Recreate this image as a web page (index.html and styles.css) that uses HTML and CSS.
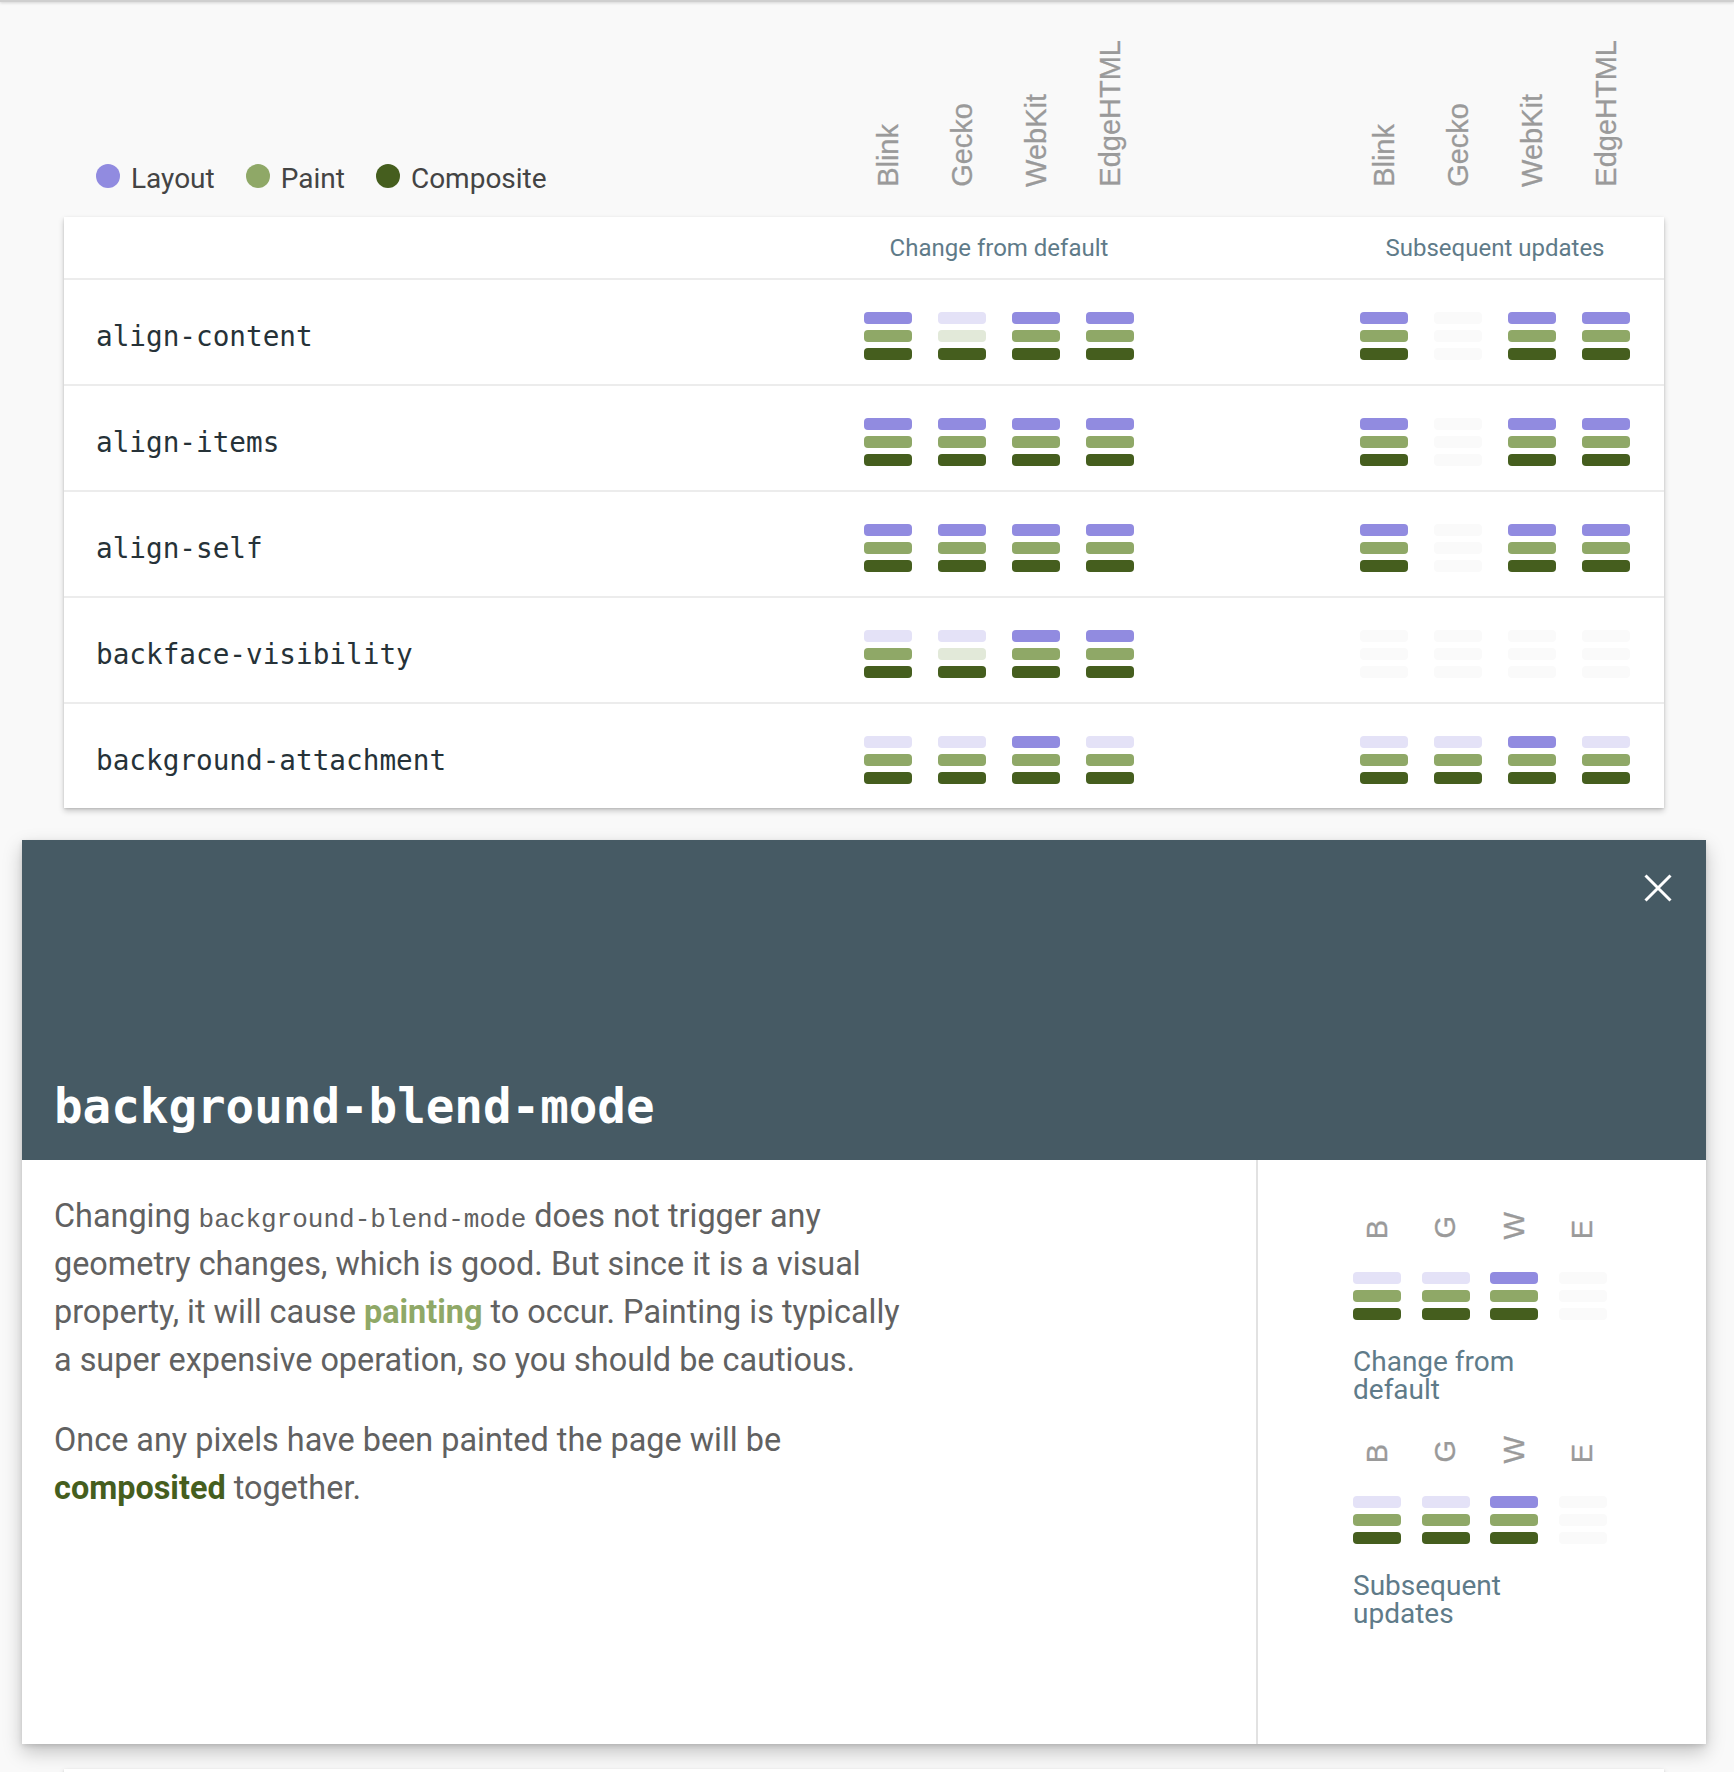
FILE: index.html
```html
<!DOCTYPE html>
<html lang="en">
<head>
<meta charset="utf-8">
<title>CSS Triggers</title>
<link rel="stylesheet" href="styles.css">
</head>
<body>
<div class="topbar"></div>
<div class="page">
  <div class="head grid">
    <div class="legend">
      <span class="legend-item"><span class="dot dot-layout"></span>Layout</span>
      <span class="legend-item"><span class="dot dot-paint"></span>Paint</span>
      <span class="legend-item"><span class="dot dot-composite"></span>Composite</span>
    </div>
    <div class="engines g1">
      <div class="engine"><span>Blink</span></div>
      <div class="engine"><span>Gecko</span></div>
      <div class="engine"><span>WebKit</span></div>
      <div class="engine"><span>EdgeHTML</span></div>
    </div>
    <div class="engines g2">
      <div class="engine"><span>Blink</span></div>
      <div class="engine"><span>Gecko</span></div>
      <div class="engine"><span>WebKit</span></div>
      <div class="engine"><span>EdgeHTML</span></div>
    </div>
  </div>

  <div class="card table">
    <div class="row row-head grid">
      <div class="group-label g1">Change from default</div>
      <div class="group-label g2">Subsequent updates</div>
    </div>

    <div class="row grid">
      <div class="prop">align-content</div>
      <div class="bars g1">
        <div class="cell"><i class="b l"></i><i class="b p"></i><i class="b c"></i></div>
        <div class="cell"><i class="b l off"></i><i class="b p off"></i><i class="b c"></i></div>
        <div class="cell"><i class="b l"></i><i class="b p"></i><i class="b c"></i></div>
        <div class="cell"><i class="b l"></i><i class="b p"></i><i class="b c"></i></div>
      </div>
      <div class="bars g2">
        <div class="cell"><i class="b l"></i><i class="b p"></i><i class="b c"></i></div>
        <div class="cell"><i class="b none"></i><i class="b none"></i><i class="b none"></i></div>
        <div class="cell"><i class="b l"></i><i class="b p"></i><i class="b c"></i></div>
        <div class="cell"><i class="b l"></i><i class="b p"></i><i class="b c"></i></div>
      </div>
    </div>

    <div class="row grid">
      <div class="prop">align-items</div>
      <div class="bars g1">
        <div class="cell"><i class="b l"></i><i class="b p"></i><i class="b c"></i></div>
        <div class="cell"><i class="b l"></i><i class="b p"></i><i class="b c"></i></div>
        <div class="cell"><i class="b l"></i><i class="b p"></i><i class="b c"></i></div>
        <div class="cell"><i class="b l"></i><i class="b p"></i><i class="b c"></i></div>
      </div>
      <div class="bars g2">
        <div class="cell"><i class="b l"></i><i class="b p"></i><i class="b c"></i></div>
        <div class="cell"><i class="b none"></i><i class="b none"></i><i class="b none"></i></div>
        <div class="cell"><i class="b l"></i><i class="b p"></i><i class="b c"></i></div>
        <div class="cell"><i class="b l"></i><i class="b p"></i><i class="b c"></i></div>
      </div>
    </div>

    <div class="row grid">
      <div class="prop">align-self</div>
      <div class="bars g1">
        <div class="cell"><i class="b l"></i><i class="b p"></i><i class="b c"></i></div>
        <div class="cell"><i class="b l"></i><i class="b p"></i><i class="b c"></i></div>
        <div class="cell"><i class="b l"></i><i class="b p"></i><i class="b c"></i></div>
        <div class="cell"><i class="b l"></i><i class="b p"></i><i class="b c"></i></div>
      </div>
      <div class="bars g2">
        <div class="cell"><i class="b l"></i><i class="b p"></i><i class="b c"></i></div>
        <div class="cell"><i class="b none"></i><i class="b none"></i><i class="b none"></i></div>
        <div class="cell"><i class="b l"></i><i class="b p"></i><i class="b c"></i></div>
        <div class="cell"><i class="b l"></i><i class="b p"></i><i class="b c"></i></div>
      </div>
    </div>

    <div class="row grid">
      <div class="prop">backface-visibility</div>
      <div class="bars g1">
        <div class="cell"><i class="b l off"></i><i class="b p"></i><i class="b c"></i></div>
        <div class="cell"><i class="b l off"></i><i class="b p off"></i><i class="b c"></i></div>
        <div class="cell"><i class="b l"></i><i class="b p"></i><i class="b c"></i></div>
        <div class="cell"><i class="b l"></i><i class="b p"></i><i class="b c"></i></div>
      </div>
      <div class="bars g2">
        <div class="cell"><i class="b none"></i><i class="b none"></i><i class="b none"></i></div>
        <div class="cell"><i class="b none"></i><i class="b none"></i><i class="b none"></i></div>
        <div class="cell"><i class="b none"></i><i class="b none"></i><i class="b none"></i></div>
        <div class="cell"><i class="b none"></i><i class="b none"></i><i class="b none"></i></div>
      </div>
    </div>

    <div class="row grid">
      <div class="prop">background-attachment</div>
      <div class="bars g1">
        <div class="cell"><i class="b l off"></i><i class="b p"></i><i class="b c"></i></div>
        <div class="cell"><i class="b l off"></i><i class="b p"></i><i class="b c"></i></div>
        <div class="cell"><i class="b l"></i><i class="b p"></i><i class="b c"></i></div>
        <div class="cell"><i class="b l off"></i><i class="b p"></i><i class="b c"></i></div>
      </div>
      <div class="bars g2">
        <div class="cell"><i class="b l off"></i><i class="b p"></i><i class="b c"></i></div>
        <div class="cell"><i class="b l off"></i><i class="b p"></i><i class="b c"></i></div>
        <div class="cell"><i class="b l"></i><i class="b p"></i><i class="b c"></i></div>
        <div class="cell"><i class="b l off"></i><i class="b p"></i><i class="b c"></i></div>
      </div>
    </div>
  </div>
</div>

<div class="modal">
  <div class="modal-head">
    <button class="close" aria-label="Close">
      <svg width="28" height="28" viewBox="0 0 28 28"><path d="M1.5 1.5 L26.5 26.5 M26.5 1.5 L1.5 26.5" stroke="#ffffff" stroke-width="3" fill="none"/></svg>
    </button>
    <h1 class="modal-title">background-blend-mode</h1>
  </div>
  <div class="modal-body">
    <div class="desc">
      <p>Changing <code>background-blend-mode</code> does not trigger any geometry changes, which is good. But since it is a visual property, it will cause <strong class="paint-word">painting</strong> to occur. Painting is typically a super expensive operation, so you should be cautious.</p>
      <p>Once any pixels have been painted the page will be <strong class="comp-word">composited</strong> together.</p>
    </div>
    <div class="side">
      <div class="side-group">
        <div class="letters">
          <div class="letter"><span>B</span></div>
          <div class="letter"><span>G</span></div>
          <div class="letter"><span>W</span></div>
          <div class="letter"><span>E</span></div>
        </div>
        <div class="side-bars">
          <div class="cell"><i class="b l off"></i><i class="b p"></i><i class="b c"></i></div>
          <div class="cell"><i class="b l off"></i><i class="b p"></i><i class="b c"></i></div>
          <div class="cell"><i class="b l"></i><i class="b p"></i><i class="b c"></i></div>
          <div class="cell"><i class="b none"></i><i class="b none"></i><i class="b none"></i></div>
        </div>
        <div class="side-label">Change from default</div>
      </div>
      <div class="side-group">
        <div class="letters">
          <div class="letter"><span>B</span></div>
          <div class="letter"><span>G</span></div>
          <div class="letter"><span>W</span></div>
          <div class="letter"><span>E</span></div>
        </div>
        <div class="side-bars">
          <div class="cell"><i class="b l off"></i><i class="b p"></i><i class="b c"></i></div>
          <div class="cell"><i class="b l off"></i><i class="b p"></i><i class="b c"></i></div>
          <div class="cell"><i class="b l"></i><i class="b p"></i><i class="b c"></i></div>
          <div class="cell"><i class="b none"></i><i class="b none"></i><i class="b none"></i></div>
        </div>
        <div class="side-label">Subsequent updates</div>
      </div>
    </div>
  </div>
</div>

<div class="page">
  <div class="card table next"></div>
</div>
</body>
</html>
```

FILE: styles.css
```css
* { box-sizing: border-box; }

html, body {
  margin: 0;
  padding: 0;
  background: #f9f9f9;
  font-family: Roboto, "Noto Sans", sans-serif;
}

.topbar {
  height: 2px;
  background: #cfcfcf;
  box-shadow: 0 1px 3px rgba(0, 0, 0, 0.18);
}

.page {
  margin-left: 64px;
  width: 1600px;
}

.grid {
  display: grid;
  grid-template-columns: 1fr 296px 200px 296px;
  padding-right: 21px;
}

.g1 { grid-column: 2; }
.g2 { grid-column: 4; }

/* ---------- header above the table ---------- */
.head {
  height: 215px;
  padding-bottom: 30px;
  align-items: end;
}

.legend {
  grid-column: 1;
  display: flex;
  align-items: center;
  gap: 31px;
  padding-left: 32px;
  margin-bottom: -8px;
  font-size: 28px;
  color: #444444;
}

.legend-item {
  display: flex;
  align-items: center;
}

.dot {
  width: 24px;
  height: 24px;
  border-radius: 50%;
  margin-right: 11px;
  margin-bottom: 5px;
}

.dot-layout { background: #918be0; }
.dot-paint { background: #8fa867; }
.dot-composite { background: #455e1e; }

.engines {
  display: flex;
  align-items: flex-end;
}

.engine {
  width: 74px;
  display: flex;
  justify-content: center;
  align-items: flex-end;
}

.engine span,
.letter span {
  writing-mode: vertical-rl;
  transform: rotate(180deg);
  font-family: "Liberation Sans", Arial, sans-serif;
  font-size: 29px;
  line-height: 1;
  color: #9a9a9a;
  white-space: nowrap;
  -webkit-text-stroke: 0.3px #9a9a9a;
}

/* ---------- table ---------- */
.card {
  background: #ffffff;
  box-shadow: 0 3px 6px rgba(0, 0, 0, 0.2), 0 1px 2px rgba(0, 0, 0, 0.12);
}

.row {
  height: 106px;
  padding-top: 8px;
  border-bottom: 2px solid #ececec;
  align-items: center;
}

.row:last-child {
  height: 104px;
  border-bottom: none;
}

.row-head {
  height: 63px;
  padding-top: 0;
}

.group-label {
  text-align: center;
  font-size: 24px;
  color: #5f7b89;
}

.prop {
  grid-column: 1;
  padding-left: 32px;
  font-family: "DejaVu Sans Mono", "Liberation Mono", monospace;
  font-size: 27.7px;
  color: #263238;
}

.bars {
  display: flex;
}

.cell {
  display: flex;
  flex-direction: column;
  align-items: center;
  gap: 6px;
}

.bars .cell { width: 74px; }

.b {
  display: block;
  width: 48px;
  height: 12px;
  border-radius: 4px;
}

.b.l { background: #918be0; }
.b.p { background: #8fa867; }
.b.c { background: #455e1e; }
.b.l.off { background: #e4e2f7; }
.b.p.off { background: #e2e9d9; }
.b.none { background: #fafafa; }

/* ---------- modal ---------- */
.modal {
  margin: 32px 0 0 22px;
  width: 1684px;
  height: 904px;
  background: #ffffff;
  display: flex;
  flex-direction: column;
  box-shadow: 0 8px 18px rgba(0, 0, 0, 0.22), 0 2px 5px rgba(0, 0, 0, 0.12);
}

.modal-head {
  height: 320px;
  background: #465a64;
  display: flex;
  flex-direction: column;
  padding: 34px 34px 30px 32px;
}

.close {
  align-self: flex-end;
  width: 28px;
  height: 28px;
  padding: 0;
  border: none;
  background: none;
  display: block;
}

.close svg { display: block; }

.modal-title {
  margin: auto 0 0 0;
  font-family: "DejaVu Sans Mono", "Liberation Mono", monospace;
  font-weight: bold;
  font-size: 47.5px;
  line-height: 1;
  color: #ffffff;
  letter-spacing: 0;
}

.modal-body {
  flex: 1;
  display: grid;
  grid-template-columns: 1fr 448px;
}

.desc {
  border-right: 2px solid #e2e2e2;
  padding: 32px 32px 0 32px;
}

.desc p {
  margin: 0 0 32px 0;
  max-width: 870px;
  font-size: 32.4px;
  line-height: 48px;
  color: #616161;
}

.desc code {
  font-family: "Liberation Mono", "Courier New", monospace;
  font-size: 26px;
  line-height: 1;
}

.paint-word { color: #8fa867; font-weight: 700; }
.comp-word { color: #455e1e; font-weight: 700; }

.side {
  padding: 51px 0 0 95px;
  display: flex;
  flex-direction: column;
  align-items: flex-start;
}

.side-group {
  width: 254px;
  margin-bottom: 31px;
}

.letters,
.side-bars {
  display: flex;
  justify-content: space-between;
}

.letters {
  height: 28px;
  align-items: flex-end;
}

.letter {
  width: 48px;
  display: flex;
  justify-content: center;
  align-items: flex-end;
}

.side-bars {
  margin-top: 33px;
}

.side-label {
  margin-top: 28px;
  font-size: 28px;
  line-height: 28px;
  color: #5f7b89;
}

.next {
  margin-top: 25px;
  height: 120px;
}
```
